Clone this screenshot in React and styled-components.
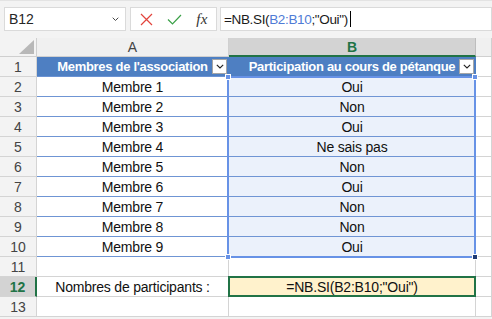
import React from 'react';
import styled, { createGlobalStyle, css } from 'styled-components';

const Global = createGlobalStyle`
  html, body { margin: 0; padding: 0; background: #f3f3f3; }
  body { font-family: "Liberation Sans", Arial, sans-serif; }
`;

const Window = styled.div`
  width: 492px;
  height: 319px;
  overflow: hidden;
  background: #f3f3f3;
  display: flex;
  flex-direction: column;
`;

const FormulaBar = styled.div`
  height: 38px;
  box-sizing: border-box;
  border-top: 1px solid #e3e3e3;
  padding: 6px 0 0 4px;
  display: flex;
  gap: 4px;
  align-items: flex-start;
`;

const Box = styled.div`
  height: 24px;
  box-sizing: border-box;
  background: #fff;
  border: 1px solid #dadada;
  display: flex;
  align-items: center;
`;

const NameBox = styled(Box)`
  width: 122px;
  padding: 0 6px 0 4px;
  justify-content: space-between;
  font-size: 14px;
  color: #262626;
`;

const IconBox = styled(Box)`
  width: 87px;
  padding: 0 8px 0 9px;
  justify-content: space-between;
`;

const FormulaInput = styled(Box)`
  flex: 1;
  margin-left: -1px;
  padding-left: 3px;
  font-size: 13.5px;
  letter-spacing: -0.35px;
  color: #1a1a1a;
  white-space: pre;
`;

const Ref = styled.span`
  color: #4f7bd6;
`;

const Caret = styled.span`
  display: inline-block;
  width: 1px;
  height: 16px;
  background: #000;
  margin-left: 2px;
`;

const Fx = styled.span`
  font-family: "Liberation Serif", "DejaVu Serif", serif;
  font-style: italic;
  font-size: 15px;
  color: #333;
  letter-spacing: 0.5px;
`;

const Sheet = styled.div`
  position: relative;
  display: grid;
  grid-template-columns: 37px 192px 247px 1fr;
  grid-template-rows: 19px repeat(13, 20px);
  background: #fff;
  font-size: 14px;
  letter-spacing: -0.2px;
`;

const CellBase = styled.div`
  position: relative;
  box-sizing: border-box;
  border-right: 1px solid #d4d4d4;
  border-bottom: 1px solid #d4d4d4;
  display: flex;
  align-items: center;
  justify-content: center;
  white-space: nowrap;
  overflow: visible;
`;

const Corner = styled(CellBase)`
  background: #f3f3f3;
  border-color: #cfcfcf;
`;

const Triangle = styled.div`
  position: absolute;
  right: 2px;
  bottom: 2px;
  width: 0;
  height: 0;
  border-left: 15px solid transparent;
  border-bottom: 14px solid #b8b8b8;
`;

const ColHeader = styled(CellBase)`
  background: #f0f0f0;
  color: #444;
  border-color: #d0d0d0;
  letter-spacing: 0;
  ${(p) =>
    p.$active &&
    css`
      background: #d3d3d3;
      color: #217346;
      font-weight: bold;
      border-bottom: 2px solid #217346;
      border-right-color: #bdbdbd;
    `}
`;

const RowHeader = styled(CellBase)`
  background: #f3f3f3;
  color: #444;
  border-color: #d4d4d4;
  letter-spacing: 0;
  ${(p) =>
    p.$active &&
    css`
      background: #d3d3d3;
      color: #217346;
      font-weight: bold;
      border-right: 2px solid #217346;
    `}
`;

const TableHead = styled(CellBase)`
  background: #4e7fc2;
  color: #fff;
  font-weight: bold;
  font-size: 13px;
  letter-spacing: -0.3px;
  border-right-color: #4e7fc2;
  border-bottom: 1px solid #6b93d4;
`;

const DataCell = styled(CellBase)`
  color: #111;
  background: ${(p) => (p.$selected ? '#ebf1fb' : '#fff')};
  border-bottom: 1px solid #6f95d4;
`;

const Plain = styled(CellBase)`
  color: #111;
  background: #fff;
`;

const ActiveCell = styled(CellBase)`
  color: #111;
  background: #fff2cc;
  border: 2px solid #217346;
  margin: -1px 0 0 -1px;
`;

const DropButton = styled.div`
  position: absolute;
  right: 1px;
  top: 2px;
  width: 15px;
  height: 15px;
  box-sizing: border-box;
  background: #fff;
  border: 1px solid #a6a6a6;
  display: flex;
  align-items: center;
  justify-content: center;
`;

const Selection = styled.div`
  position: absolute;
  left: 227px;
  top: 38px;
  width: 249px;
  height: 182px;
  box-sizing: border-box;
  border: 2px solid #6792e6;
  pointer-events: none;
`;

const Handle = styled.div`
  position: absolute;
  width: 6px;
  height: 6px;
  box-sizing: border-box;
  background: ${(p) => p.$color || '#6792e6'};
  border: 1px solid #fff;
  ${(p) => (p.$top ? 'top: -4px;' : 'bottom: -4px;')}
  ${(p) => (p.$left ? 'left: -4px;' : 'right: -4px;')}
`;

const Chevron = ({ size = 8, color = '#333' }) => (
  <svg width={size} height={size * 0.6} viewBox="0 0 10 6">
    <path d="M1 1 L5 5 L9 1" fill="none" stroke={color} strokeWidth="1.4" />
  </svg>
);

const rows = [
  ['Membre 1', 'Oui'],
  ['Membre 2', 'Non'],
  ['Membre 3', 'Oui'],
  ['Membre 4', 'Ne sais pas'],
  ['Membre 5', 'Non'],
  ['Membre 6', 'Oui'],
  ['Membre 7', 'Non'],
  ['Membre 8', 'Non'],
  ['Membre 9', 'Oui'],
];

export default function App() {
  return (
    <Window>
      <Global />
      <FormulaBar>
        <NameBox>
          <span>B12</span>
          <Chevron size={7} color="#444" />
        </NameBox>
        <IconBox>
          <svg width="13" height="13" viewBox="0 0 13 13">
            <path d="M1 1 L12 12 M12 1 L1 12" stroke="#e2433c" strokeWidth="1.2" fill="none" />
          </svg>
          <svg width="15" height="11" viewBox="0 0 15 11">
            <path d="M1 5.5 L5.5 10 L14 1" stroke="#3aa047" strokeWidth="1.2" fill="none" />
          </svg>
          <Fx>fx</Fx>
        </IconBox>
        <FormulaInput>
          =NB.SI(<Ref>B2:B10</Ref>;"Oui")<Caret />
        </FormulaInput>
      </FormulaBar>

      <Sheet>
        <Corner>
          <Triangle />
        </Corner>
        <ColHeader>A</ColHeader>
        <ColHeader $active>B</ColHeader>
        <ColHeader />

        <RowHeader>1</RowHeader>
        <TableHead>
          Membres de l'association
          <DropButton>
            <Chevron size={8} color="#222" />
          </DropButton>
        </TableHead>
        <TableHead>
          Participation au cours de pétanque
          <DropButton>
            <Chevron size={8} color="#222" />
          </DropButton>
        </TableHead>
        <Plain />

        {rows.map(([a, b], i) => (
          <React.Fragment key={a}>
            <RowHeader>{i + 2}</RowHeader>
            <DataCell>{a}</DataCell>
            <DataCell $selected>{b}</DataCell>
            <Plain />
          </React.Fragment>
        ))}

        <RowHeader>11</RowHeader>
        <Plain />
        <Plain />
        <Plain />

        <RowHeader $active>12</RowHeader>
        <Plain>Nombres de participants :</Plain>
        <ActiveCell>=NB.SI(B2:B10;"Oui")</ActiveCell>
        <Plain />

        <RowHeader>13</RowHeader>
        <Plain />
        <Plain />
        <Plain />

        <Selection>
          <Handle $top $left />
          <Handle $top />
          <Handle $left />
          <Handle $color="#1f3b73" />
        </Selection>
      </Sheet>
    </Window>
  );
}
